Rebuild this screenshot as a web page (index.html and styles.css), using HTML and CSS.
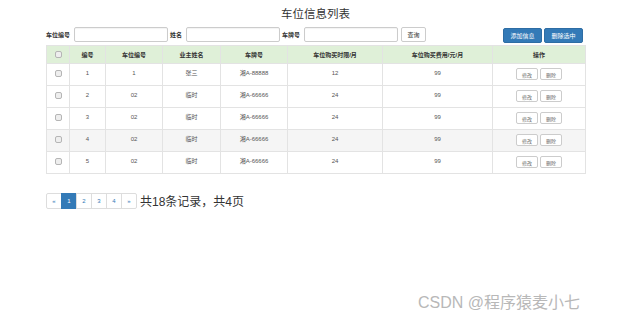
FILE: index.html
```html
<!DOCTYPE html>
<html>
<head>
  <meta charset="UTF-8">
  <title>车位信息列表</title>
  <link rel="stylesheet" href="styles.css">
</head>
<body>
  <div class="page">
    <h3 class="page-title">车位信息列表</h3>

    <!-- Search bar + actions -->
    <div class="toolbar">
      <form class="search-form">
        <label class="search-label">车位编号</label>
        <input type="text" class="search-input">
        <label class="search-label">姓名</label>
        <input type="text" class="search-input">
        <label class="search-label">车牌号</label>
        <input type="text" class="search-input">
        <button type="button" class="btn btn-default btn-query">查询</button>
      </form>
      <div class="actions">
        <button type="button" class="btn btn-primary">添加信息</button>
        <button type="button" class="btn btn-primary">删除选中</button>
      </div>
    </div>

    <!-- Parking space table -->
    <table class="data-table">
      <thead>
        <tr>
          <th class="col-check"><span class="check"></span></th>
          <th class="col-id">编号</th>
          <th class="col-no">车位编号</th>
          <th class="col-owner">业主姓名</th>
          <th class="col-plate">车牌号</th>
          <th class="col-term">车位购买时限/月</th>
          <th class="col-fee">车位购买费用/元/月</th>
          <th class="col-op">操作</th>
        </tr>
      </thead>
      <tbody>
        <tr>
          <td><span class="check"></span></td>
          <td>1</td><td>1</td><td>张三</td><td>湘A-88888</td><td>12</td><td>99</td>
          <td><button class="btn btn-sm">修改</button><button class="btn btn-sm">删除</button></td>
        </tr>
        <tr>
          <td><span class="check"></span></td>
          <td>2</td><td>02</td><td>临时</td><td>湘A-66666</td><td>24</td><td>99</td>
          <td><button class="btn btn-sm">修改</button><button class="btn btn-sm">删除</button></td>
        </tr>
        <tr>
          <td><span class="check"></span></td>
          <td>3</td><td>02</td><td>临时</td><td>湘A-66666</td><td>24</td><td>99</td>
          <td><button class="btn btn-sm">修改</button><button class="btn btn-sm">删除</button></td>
        </tr>
        <tr class="hover">
          <td><span class="check"></span></td>
          <td>4</td><td>02</td><td>临时</td><td>湘A-66666</td><td>24</td><td>99</td>
          <td><button class="btn btn-sm">修改</button><button class="btn btn-sm">删除</button></td>
        </tr>
        <tr>
          <td><span class="check"></span></td>
          <td>5</td><td>02</td><td>临时</td><td>湘A-66666</td><td>24</td><td>99</td>
          <td><button class="btn btn-sm">修改</button><button class="btn btn-sm">删除</button></td>
        </tr>
      </tbody>
    </table>

    <!-- Pagination -->
    <div class="pager-row">
      <ul class="pagination">
        <li><a href="#">«</a></li>
        <li class="active"><a href="#">1</a></li>
        <li><a href="#">2</a></li>
        <li><a href="#">3</a></li>
        <li><a href="#">4</a></li>
        <li><a href="#">»</a></li>
      </ul>
      <span class="pager-info">共18条记录，共4页</span>
    </div>
  </div>

  <div class="watermark">CSDN @程序猿麦小七</div>
</body>
</html>
```

FILE: styles.css
```css
/* ========== PAGE ========== */
body {
  margin: 0;
  font-family: "Liberation Sans", "Noto Sans CJK SC", sans-serif;
  color: #333;
  background: #fff;
}

.page {
  width: 539px;
  padding-left: 46px;
}

.page-title {
  margin: 0;
  padding-top: 7px;
  height: 19px;
  font-size: 11.5px;
  font-weight: normal;
  line-height: 15px;
  text-align: center;
  color: #333;
  box-sizing: border-box;
}

/* ========== TOOLBAR ========== */
.toolbar {
  display: flex;
  justify-content: space-between;
  align-items: flex-start;
  height: 19px;
  padding-top: 7px;
}

.search-form {
  display: flex;
  align-items: center;
  margin: 0;
  height: 15px;
  margin-top: 1px;
}

.search-label {
  font-size: 6px;
  font-weight: bold;
  color: #333;
  margin-right: 4px;
}

.search-input {
  width: 94px;
  height: 15px;
  box-sizing: border-box;
  border: 1px solid #ccc;
  border-radius: 2px;
  margin: 0 2px 0 0;
  padding: 0;
  box-shadow: inset 0 1px 1px rgba(0, 0, 0, .05);
}

.btn {
  font-family: inherit;
  box-sizing: border-box;
  border: 1px solid #ccc;
  border-radius: 2px;
  background: #fff;
  color: #333;
  font-size: 6px;
  padding: 0;
  cursor: pointer;
}

.btn-query {
  width: 25px;
  height: 15px;
  margin-left: 1px;
}

.actions {
  display: flex;
  gap: 2px;
  margin-top: 2px;
  margin-right: 2px;
}

.btn-primary {
  width: 39px;
  height: 15px;
  background: #337ab7;
  border-color: #2e6da4;
  color: #fff;
}

/* ========== TABLE ========== */
.data-table {
  width: 539px;
  border-collapse: collapse;
  table-layout: fixed;
  margin-top: 0;
  font-size: 6px;
}

.data-table th,
.data-table td {
  border: 1px solid #e3e3e3;
  text-align: center;
  padding: 0;
}

.data-table thead tr {
  background: #dff0d8;
  height: 18px;
}

.data-table th {
  font-weight: bold;
  color: #333;
}

.data-table tbody tr {
  height: 22px;
}

.data-table td {
  color: #555;
  vertical-align: top;
  padding-top: 5px;
  line-height: 8px;
}

.data-table tbody tr.hover {
  background: #f5f5f5;
}

.col-check { width: 22px; }
.col-id { width: 35px; }
.col-no { width: 56px; }
.col-owner { width: 57px; }
.col-plate { width: 66px; }
.col-term { width: 94px; }
.col-fee { width: 109px; }
.col-op { width: 92px; }

.check {
  display: inline-block;
  width: 5px;
  height: 5px;
  border: 1px solid #b5b5b5;
  border-radius: 2px;
  background: #eee;
  vertical-align: middle;
}

.data-table thead .check {
  vertical-align: -1px;
}

.btn-sm {
  width: 22px;
  height: 12px;
  font-size: 5px;
  color: #666;
  margin: -1px 1px 0;
  vertical-align: top;
}

/* ========== PAGINATION ========== */
.pager-row {
  display: flex;
  align-items: center;
  margin-top: 18px;
}

.pagination {
  display: flex;
  list-style: none;
  margin: 0;
  padding: 0;
}

.pagination a {
  display: block;
  width: 16px;
  height: 16px;
  box-sizing: border-box;
  border: 1px solid #ddd;
  margin-left: -1px;
  font-size: 6px;
  line-height: 14px;
  text-align: center;
  color: #337ab7;
  text-decoration: none;
}

.pagination li:first-child a {
  margin-left: 0;
  border-radius: 2px 0 0 2px;
}

.pagination li:last-child a {
  border-radius: 0 2px 2px 0;
}

.pagination .active a {
  background: #337ab7;
  border-color: #337ab7;
  color: #fff;
}

.pager-info {
  font-size: 12px;
  color: #333;
  margin-left: 3px;
}

/* ========== WATERMARK ========== */
.watermark {
  position: absolute;
  left: 418px;
  top: 289px;
  font-size: 16px;
  color: #b8b8b8;
  white-space: nowrap;
}
```
